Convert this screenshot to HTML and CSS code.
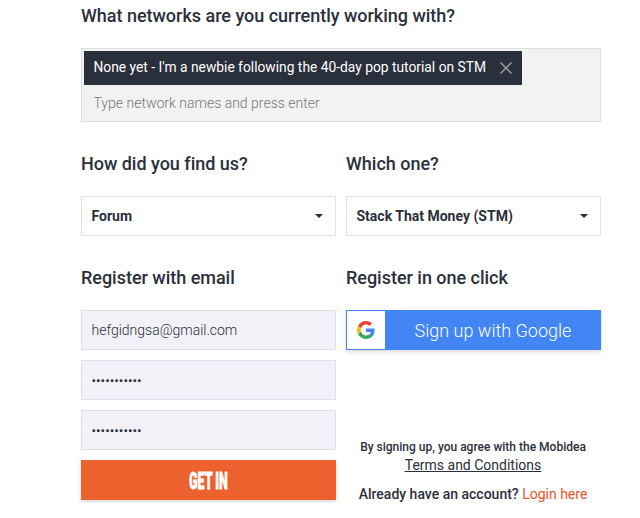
FILE: index.html
```html
<!DOCTYPE html>
<html lang="en">
<head>
  <meta charset="UTF-8">
  <title>Mobidea - Sign up</title>
  <link rel="stylesheet" href="styles.css">
</head>
<body>
  <form class="signup">
    <h2>What networks are you currently working with?</h2>
    <div class="tags">
      <div class="tag">
        <span>None yet - I'm a newbie following the 40-day pop tutorial on STM</span>
        <svg class="close" viewBox="0 0 12 12"><path d="M0.5 0.5 L11.5 11.5 M11.5 0.5 L0.5 11.5"/></svg>
      </div>
      <input type="text" class="tag-input" placeholder="Type network names and press enter">
    </div>

    <div class="row">
      <div class="col">
        <h2>How did you find us?</h2>
        <div class="select"><span>Forum</span><i class="caret"></i></div>
      </div>
      <div class="col">
        <h2>Which one?</h2>
        <div class="select"><span>Stack That Money (STM)</span><i class="caret"></i></div>
      </div>
    </div>

    <div class="row">
      <div class="col">
        <h2>Register with email</h2>
        <input type="text" class="field" value="hefgidngsa@gmail.com">
        <div class="field password">•••••••••••</div>
        <div class="field password">•••••••••••</div>
        <button type="button" class="submit"><span>GET IN</span></button>
      </div>
      <div class="col">
        <h2>Register in one click</h2>
        <button type="button" class="google">
          <span class="google-icon">
            <svg viewBox="0 0 48 48">
              <path fill="#EA4335" d="M24 9.5c3.54 0 6.71 1.22 9.21 3.6l6.85-6.85C35.9 2.38 30.47 0 24 0 14.62 0 6.51 5.38 2.56 13.22l7.98 6.19C12.43 13.72 17.74 9.5 24 9.5z"/>
              <path fill="#4285F4" d="M46.98 24.55c0-1.57-.15-3.09-.38-4.55H24v9.02h12.94c-.58 2.96-2.26 5.48-4.78 7.18l7.73 6c4.51-4.18 7.09-10.36 7.09-17.65z"/>
              <path fill="#FBBC05" d="M10.53 28.59c-.48-1.45-.76-2.99-.76-4.59s.27-3.14.76-4.59l-7.98-6.19C.92 16.46 0 20.12 0 24c0 3.88.92 7.54 2.56 10.78l7.97-6.19z"/>
              <path fill="#34A853" d="M24 48c6.48 0 11.93-2.13 15.89-5.81l-7.73-6c-2.15 1.45-4.92 2.3-8.16 2.3-6.26 0-11.57-4.22-13.47-9.91l-7.98 6.19C6.51 42.62 14.62 48 24 48z"/>
            </svg>
          </span>
          <span class="google-text">Sign up with Google</span>
        </button>
        <p class="terms">By signing up, you agree with the Mobidea<br><a href="#">Terms and Conditions</a></p>
        <p class="login">Already have an account? <a href="#">Login here</a></p>
      </div>
    </div>
  </form>
</body>
</html>
```
FILE: styles.css
```css
* {
  box-sizing: border-box;
}
body {
  margin: 0;
  background: #fff;
  color: #2b2f3b;
  font-family: Roboto, Arial, sans-serif;
  overflow: hidden;
}
.signup {
  width: 520px;
  margin: 4px 0 0 81px;
}
h2 {
  margin: 0 0 20px;
  font-size: 18px;
  line-height: 24px;
  font-weight: 500;
  letter-spacing: -0.02px;
  white-space: nowrap;
}
.tags {
  height: 74px;
  padding: 2px;
  border: 1px solid #dedede;
  background: #f2f2f2;
}
.tag {
  display: flex;
  align-items: center;
  justify-content: space-between;
  width: 438px;
  height: 34px;
  padding: 0 10px 0 9.5px;
  background: #2a2f3c;
  color: #fff;
  font-size: 13.8px;
  line-height: 16px;
  white-space: nowrap;
}
.tag span {
  padding-bottom: 2px;
}
.close {
  flex: none;
  width: 12px;
  height: 12px;
  fill: none;
  stroke: #a3a5ab;
  stroke-width: 1.3;
}
.tag-input {
  display: block;
  width: 100%;
  height: 36px;
  padding: 0 9.5px;
  border: 0;
  background: none;
  font: 300 14px Roboto, Arial, sans-serif;
}
.tag-input::placeholder {
  color: #777;
}
.row {
  display: flex;
  gap: 10px;
  margin-top: 30px;
}
.col {
  width: 255px;
}
.select {
  display: flex;
  align-items: center;
  justify-content: space-between;
  height: 40px;
  padding: 0 12px 0 9.5px;
  border: 1px solid #e1e1e1;
  font-size: 14px;
  font-weight: 700;
}
.caret {
  border: 4px solid transparent;
  border-top-color: #2b2b2b;
  border-bottom: 0;
}
.field {
  display: block;
  width: 100%;
  height: 40px;
  margin-bottom: 10px;
  padding: 0 9.5px;
  border: 1px solid #dfdfe8;
  background: #f1f1f7;
  color: #2b2f3b;
  font: 300 14px Roboto, Arial, sans-serif;
}
.password {
  font: 400 13.5px/38px Roboto, Arial, sans-serif;
}
.submit {
  display: block;
  width: 100%;
  height: 40px;
  padding: 0;
  border: 0;
  background: #ec612d;
  box-shadow: 0 2px 4px rgba(0, 0, 0, 0.15);
  color: #fff;
  font: 900 24px Roboto, Arial, sans-serif;
}
.submit span {
  display: block;
  padding-top: 2px;
  transform: scaleX(0.52);
  -webkit-text-stroke: 0.8px #fff;
}
.google {
  display: flex;
  width: 100%;
  height: 40px;
  padding: 0;
  border: 1px solid #4286f5;
  background: #4286f5;
  box-shadow: 0 2px 4px rgba(0, 0, 0, 0.15);
  color: #fff;
  font: 300 18px Roboto, Arial, sans-serif;
}
.google-icon {
  display: flex;
  align-items: center;
  justify-content: center;
  width: 38px;
  height: 38px;
  background: #fff;
}
.google-icon svg {
  width: 18px;
  height: 18px;
}
.google-text {
  flex: 1;
  padding: 1px 0 0 1px;
  line-height: 38px;
}
.terms, .login {
  margin: 0 1px 0 0;
  text-align: center;
  white-space: nowrap;
}
.terms {
  margin-top: 88px;
  font-size: 12px;
  font-weight: 500;
  line-height: 18px;
}
.terms a {
  color: #2b2f3b;
  font-size: 14px;
  font-weight: 400;
}
.login {
  margin-top: 10px;
  font-size: 14px;
  font-weight: 500;
  line-height: 18px;
}
.login a {
  color: #ea5423;
  font-weight: 400;
  text-decoration: none;
}
```
